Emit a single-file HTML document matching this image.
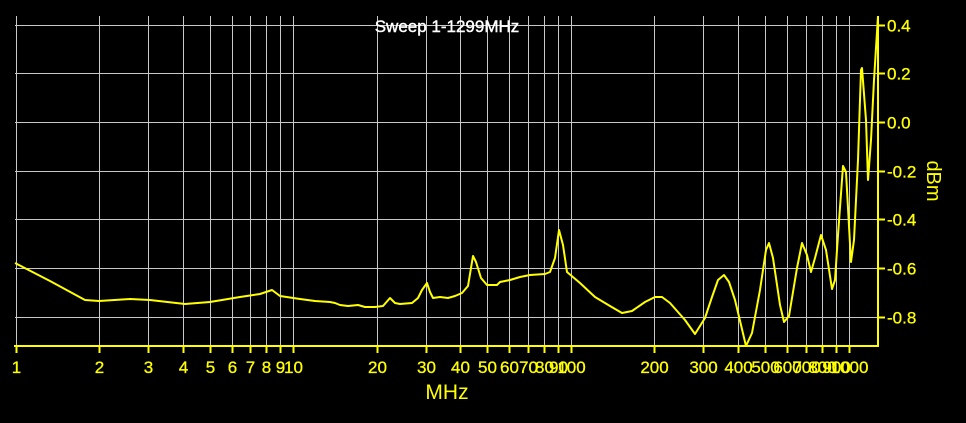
<!DOCTYPE html>
<html><head><meta charset="utf-8"><style>
html,body{margin:0;padding:0;background:#000;width:966px;height:423px;overflow:hidden}
svg{display:block}
text{font-family:"Liberation Sans",Arial,sans-serif}
</style></head><body>
<svg id="s" width="966" height="423" xmlns="http://www.w3.org/2000/svg">
<rect width="966" height="423" fill="#000"/>
<g id="grid" stroke="#c8c8c8" stroke-width="1"></g>
<text x="447" y="32" fill="#fff" stroke="#fff" stroke-width="0.4" font-size="17" text-anchor="middle">Sweep 1-1299MHz</text>
<g id="ax" stroke="#ffff00" stroke-width="2" fill="none"></g>
<g id="lbl" fill="#ffff00" stroke="#ffff00" stroke-width="0.3" font-size="17"></g>
<text x="447" y="399" fill="#ffff00" font-size="21" text-anchor="middle">MHz</text>
<text transform="translate(927,181) rotate(90)" fill="#ffff00" font-size="20" text-anchor="middle">dBm</text>
<polyline fill="none" stroke="#ffff00" stroke-width="2" stroke-linejoin="round" points="15,263 50,281 85,300 99,301 130,299 150,300 185,304 210,302 240,297 260,294 272,290 280,296 300,299 315,301 330,302 335,303 340,305 348,306 358,305 365,307 375,307 383,306 390,298 395,303 400,304 412,303 418,298 422,290 427,283 430,292 433,298 440,297 448,298 455,296 462,293 468,286 473,256 476,262 481,278 487,285 497,285 500,282 510,280 520,277 530,275 545,274 550,272 555,258 559,230 563,245 567,272 580,283 595,297 610,306 622,313 632,311 645,302 655,297 662,297 670,303 685,320 695,334 705,318 712,297 718,280 724,275 729,282 735,300 741,325 746,346 752,333 760,290 766,250 769,243 773,258 780,305 784,322 789,316 797,268 802,243 807,255 811,272 815,258 821,235 826,250 832,289 835,280 838,235 843,166 846,172 851,262 854,240 858,160 861,70 862,68 866,120 868,180 871,140 874,80 878,16"/>
</svg>
<script>
var ns="http://www.w3.org/2000/svg";
function el(p,t,a,txt){var e=document.createElementNS(ns,t);for(var k in a)e.setAttribute(k,a[k]);if(txt!=null)e.textContent=txt;document.getElementById(p).appendChild(e);return e;}
function X(f){return 15.5+277.7*Math.log10(f);}
var R=878,T=16,B=346;
var fs=[];for(var d=1;d<=100;d*=10)for(var m=1;m<10;m++)fs.push(m*d);fs.push(1000);
fs.forEach(function(f){var x=Math.round(X(f))+0.5;
 el("grid","line",{x1:x,y1:T,x2:x,y2:B});
 el("ax","line",{x1:x,y1:B,x2:x,y2:B+7});
 el("lbl","text",{x:x,y:373,"text-anchor":"middle"},String(f));
});
var ys=[0.4,0.2,0.0,-0.2,-0.4,-0.6,-0.8];
ys.forEach(function(v){var y=Math.round(122-v*243.5)+0.5;
 el("grid","line",{x1:15,y1:y,x2:R,y2:y});
 el("ax","line",{x1:R,y1:y,x2:R+7,y2:y});
 el("lbl","text",{x:887,y:y+6},(v>=0?"":"-")+Math.abs(v).toFixed(1));
});
el("ax","line",{x1:14,y1:B,x2:R+1,y2:B});
el("ax","line",{x1:R,y1:T,x2:R,y2:B});
</script>
</body></html>
